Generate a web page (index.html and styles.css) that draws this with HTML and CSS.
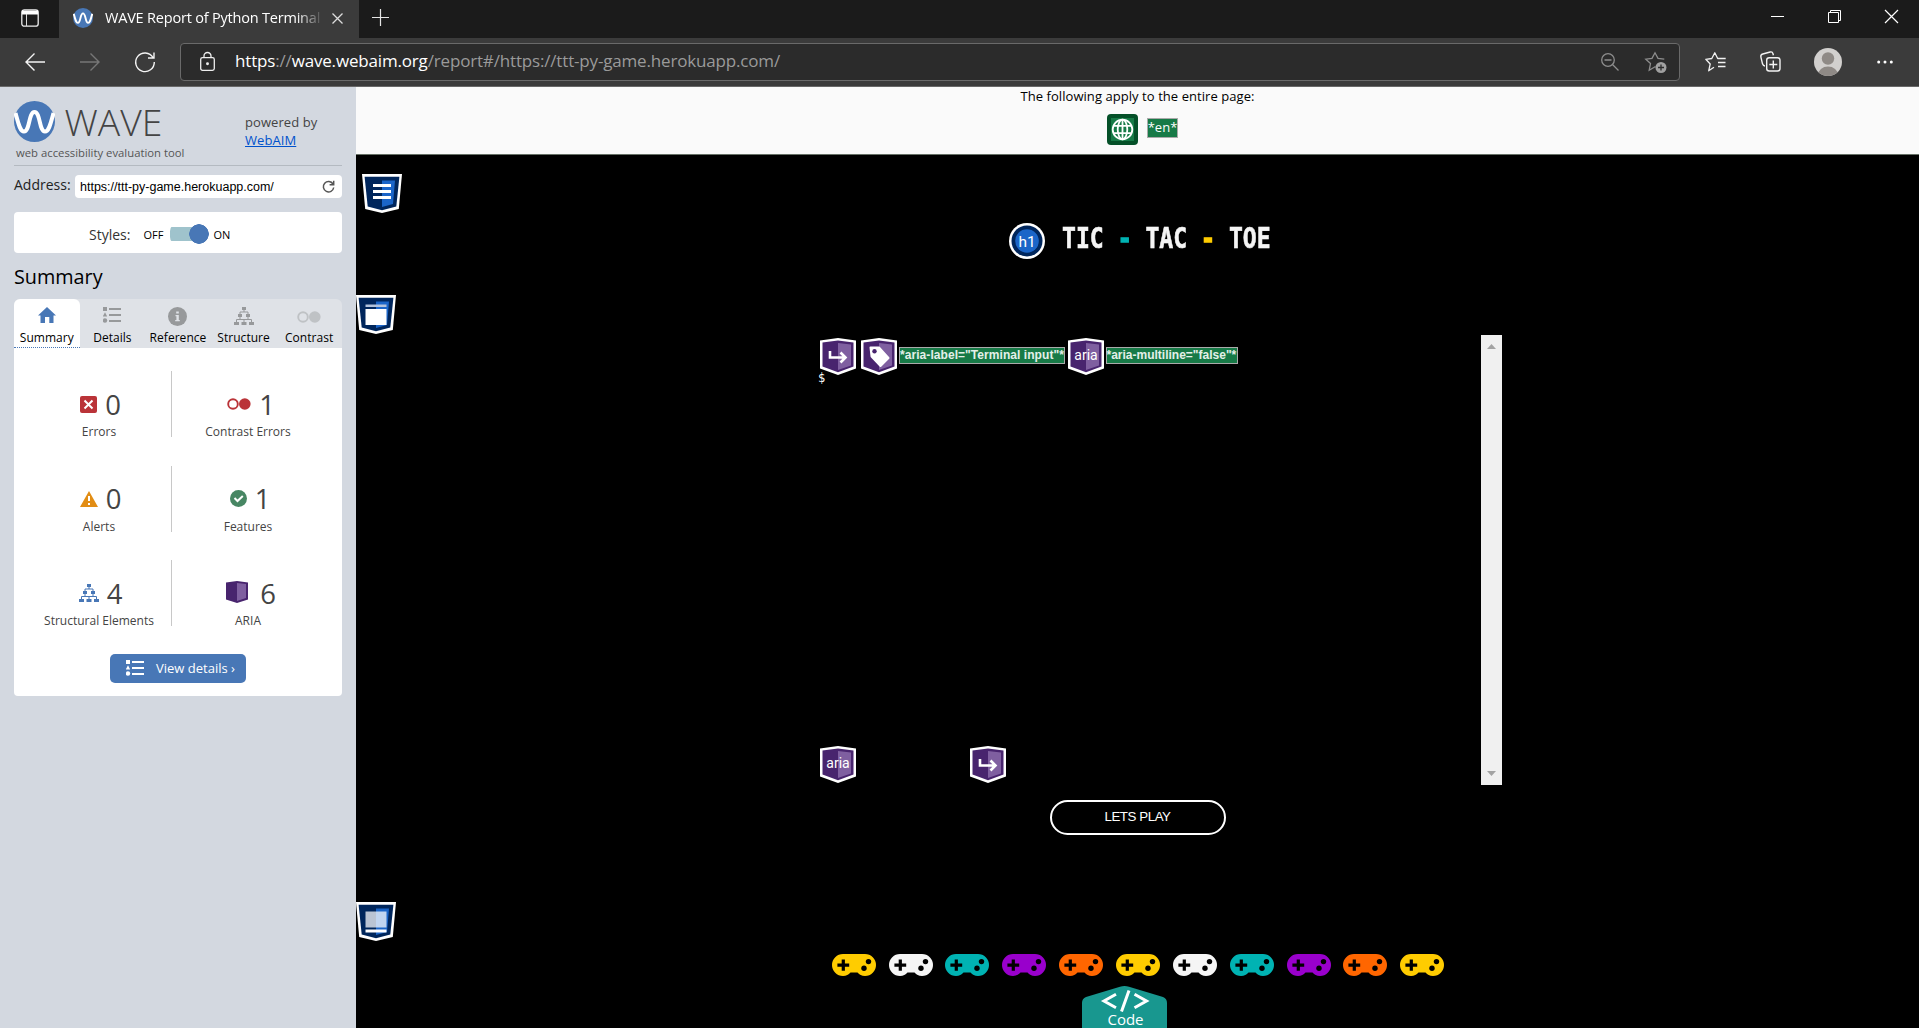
FILE: index.html
```html
<!DOCTYPE html>
<html lang="en">
<head>
<meta charset="utf-8">
<title>WAVE Report of Python Terminal</title>
<link rel="stylesheet" href="styles.css">
</head>
<body>
<svg class="defs" aria-hidden="true">
  <symbol id="wave" viewBox="0 0 41 41"><circle cx="20.5" cy="20.5" r="20.5" fill="#4877b6"/><path d="M1.5 12C4.500 23 6 30.500 10 30.500C16 30.500 14.500 11 20.500 11C26.500 11 25 30.500 31 30.500C35 30.500 36.500 23 39.500 12" fill="none" stroke="#fff" stroke-width="4"/></symbol>
  <symbol id="list" viewBox="0 0 18 16"><path d="M0 0h4v4H0zM2 5.200l2.200 4.300H-.2zM6 1h12v2H6zM6 7h12v2H6zM6 13h12v2H6z"/><circle cx="2" cy="13.500" r="2.200"/></symbol>
  <symbol id="tree" viewBox="0 0 20 18"><path d="M8 0h4v3H8zM4 7h4v3H4zM12 7h4v3h-4zM0 15h5v3H0zM7.500 15h5v3h-5zM15 15h5v3h-5z"/><path d="M10 3v2M6 7V5h8v2M6 10v2M14 10v2M2.500 15v-2.500h15V15M10 15v-2.500" fill="none" stroke="currentColor"/></symbol>
  <symbol id="dots" viewBox="0 0 24 12"><circle cx="6" cy="6" r="4.800" fill="none" stroke="currentColor" stroke-width="1.900"/><circle cx="17.800" cy="6" r="5.800"/></symbol>
  <symbol id="cube" viewBox="0 0 36 37"><path d="M0 2.500L18 0l18 2.500v28L18 37 0 30.500z" fill="#fff"/><path d="M2.500 4.600L18 2.500l15.500 2.100v24L18 34.200 2.500 28.600z" fill="#48246e"/><path d="M18 5l13 1.500v21L18 32z" fill="#7f5fa0"/></symbol>
  <symbol id="shield" viewBox="0 0 40 39"><path d="M0 0h40l-3.200 35L20 39 3.200 35z" fill="#fff"/><path d="M2.600 2.800h34.800L34.300 32.600 20 36.200 5.700 32.600z" fill="#00265c"/><path d="M20 6.500h13L31 30l-11 3z" fill="#1b65c8"/></symbol>
  <symbol id="pad" viewBox="0 0 44 22"><path d="M11 0h22a11 11 0 0 1 0 22c-3.500 0-5.500-1.500-7.500-3.500h-7C16.500 20.500 14.500 22 11 22a11 11 0 0 1 0-22z"/><path d="M9.700 5.500h3.200v4h4.300v3.200h-4.300v4H9.700v-4H5.400V9.500h4.300z" fill="#000"/><circle cx="36.500" cy="7.600" r="2.700" fill="#000"/><circle cx="32" cy="14.200" r="2.700" fill="#000"/></symbol>
</svg>

<header class="browser">
  <div class="tabbar">
    <svg class="workspace" width="18" height="18" viewBox="0 0 18 18"><rect x=".8" y=".8" width="16.400" height="16.400" rx="2.500" fill="none" stroke="#eee" stroke-width="1.300"/><path d="M1 1.500h16v4H1z" fill="#fff"/><path d="M5.500 5v12" stroke="#ddd"/></svg>
    <div class="tab">
      <svg width="20" height="20"><use href="#wave"/></svg>
      <span class="tab-title">WAVE Report of Python Terminal</span>
      <svg class="tab-close" width="11" height="11" viewBox="0 0 11 11"><path d="M.5.5l10 10M10.500.5l-10 10" stroke="#ddd" stroke-width="1.300"/></svg>
    </div>
    <svg class="newtab" width="17" height="17" viewBox="0 0 17 17"><path d="M8.500 0v17M0 8.500h17" stroke="#e5e5e5" stroke-width="1.200"/></svg>
    <div class="window-buttons">
      <svg width="13" height="13" viewBox="0 0 13 13"><path d="M0 6.500h13" stroke="#fff"/></svg>
      <svg width="13" height="13" viewBox="0 0 13 13" fill="none" stroke="#fff"><path d="M.5 2.500h10v10H.5zM2.500 2V.5h10v10H11"/></svg>
      <svg width="13" height="13" viewBox="0 0 13 13"><path d="M0 0l13 13M13 0L0 13" stroke="#fff" stroke-width="1.200"/></svg>
    </div>
  </div>
  <div class="toolbar">
    <svg width="20" height="18" viewBox="0 0 20 18" fill="none" stroke="#f4f4f4" stroke-width="1.400"><path d="M20 9H1M9.500.5L1 9l8.500 8.500"/></svg>
    <svg class="fwd" width="20" height="18" viewBox="0 0 20 18" fill="none" stroke="#777" stroke-width="1.400"><path d="M0 9h19M10.500.5L19 9l-8.500 8.500"/></svg>
    <svg class="reload" width="20" height="20" viewBox="0 0 20 20" fill="none" stroke="#f4f4f4" stroke-width="1.400"><path d="M18 5.500A9.300 9.300 0 1 0 19.300 10M19 .5V6h-6"/></svg>
    <div class="urlbar">
      <svg class="lock" width="15" height="19" viewBox="0 0 15 19" fill="none" stroke="#eee" stroke-width="1.300"><rect x=".7" y="5.700" width="13.600" height="12.600" rx="1.800"/><path d="M4 5.500V4a3.500 3.500 0 0 1 7 0v1.500"/><circle cx="7.500" cy="11.700" r=".8" fill="#eee"/></svg>
      <span class="url"><b>https</b>://<b>wave.webaim.org</b>/report#/https://ttt-py-game.herokuapp.com/</span>
      <svg class="zoomout" width="18" height="18" viewBox="0 0 18 18" fill="none" stroke="#8d8d8d" stroke-width="1.300"><circle cx="7" cy="7" r="6.300"/><path d="M3.500 7h7M11.500 11.500l6 6"/></svg>
      <svg class="addfav" width="22" height="22" viewBox="0 0 22 22" fill="none" stroke="#8d8d8d" stroke-width="1.300"><path d="M10.500 14.500l-6.300 3.800 1.300-6.800L.8 7.200l6.200-.8L10 .8l3 5.600 6.300.8"/><circle cx="16" cy="15.500" r="5.500" fill="#a0a0a0" stroke="none"/><path d="M16 12.500v6M13 15.500h6" stroke="#2b2b2b"/></svg>
    </div>
    <svg class="favs" width="21" height="20" viewBox="0 0 21 20" fill="none" stroke="#f2f2f2" stroke-width="1.300"><path d="M9 15.200l-5.300 3.600 1.500-6.800L.8 7.300l6-.8L9.800.8l2.900 5.700h8M13 10.500h7.500M13 14.500h7.500" stroke-linejoin="round"/></svg>
    <svg class="collections" width="21" height="21" viewBox="0 0 21 21" fill="none" stroke="#f2f2f2" stroke-width="1.400"><rect x="6.700" y="6.700" width="13.300" height="13.300" rx="2.500"/><path d="M13.300 9.500v8M9.300 13.500h8M5 15c-1.500 0-2-.8-2.500-2.200L.9 6.200C.5 4.500 1 3.500 2.800 3l7.400-2c1.500-.4 2.300 0 2.800 1.700l.4 1.500"/></svg>
    <svg class="avatar" width="28" height="28" viewBox="0 0 28 28"><clipPath id="round"><circle cx="14" cy="14" r="14"/></clipPath><g clip-path="url(#round)"><path d="M0 0h28v28H0z" fill="#d2d0ce"/><circle cx="14" cy="10.500" r="6.200" fill="#8f8a86"/><ellipse cx="14" cy="27" rx="10" ry="8.500" fill="#8f8a86"/></g></svg>
    <svg class="more" width="16" height="4" viewBox="0 0 16 4" fill="#fff"><circle cx="1.700" cy="2" r="1.500"/><circle cx="8" cy="2" r="1.500"/><circle cx="14.300" cy="2" r="1.500"/></svg>
  </div>
</header>

<div class="page">
  <aside class="sidebar">
    <div class="brand">
      <div class="logo">
        <div class="logo-row"><svg width="41" height="41"><use href="#wave"/></svg><span class="wordmark">WAVE</span></div>
        <div class="tagline">web accessibility evaluation tool</div>
      </div>
      <div class="powered">powered by<br><a>WebAIM</a></div>
    </div>
    <div class="address"><label>Address:</label><div class="field"><span>https://ttt-py-game.herokuapp.com/</span><svg width="13" height="13" viewBox="0 0 13 13" fill="none" stroke="#555" stroke-width="1.500"><path d="M11 4A5.200 5.200 0 1 0 11.700 7.500M11.700.7v4.100H7.600"/></svg></div></div>
    <div class="styles"><span class="styles-label">Styles:</span><span>OFF</span><i class="toggle"></i><span>ON</span></div>
    <h2>Summary</h2>
    <nav class="tabs">
      <div class="on"><svg width="18" height="16" viewBox="0 0 18 16"><path d="M9 0l9 8.500h-2.500V16h-4.200v-6H7v6H2.500V8.500H0z"/></svg><span>Summary</span></div>
      <div><svg width="18" height="16"><use href="#list"/></svg><span>Details</span></div>
      <div><svg width="19" height="19" viewBox="0 0 19 19"><circle cx="9.500" cy="9.500" r="9.500"/><path d="M8.200 4.500h2.600v2H8.200zM7.500 8h3.300v5h1v1.300H7.200V13h1.200V9.300h-.9z" fill="#dfe2e7"/></svg><span>Reference</span></div>
      <div><svg width="20" height="18"><use href="#tree"/></svg><span>Structure</span></div>
      <div class="faint"><svg width="24" height="12"><use href="#dots"/></svg><span>Contrast</span></div>
    </nav>
    <section class="panel">
      <div class="stats">
        <div class="stat red"><p><svg width="17" height="17" viewBox="0 0 17 17"><rect width="17" height="17" rx="2"/><path d="M4.500 4.500l8 8M12.500 4.500l-8 8" stroke="#fff" stroke-width="2"/></svg><b>0</b></p><span>Errors</span></div>
        <div class="stat red"><p><svg width="24" height="12"><use href="#dots"/></svg><b>1</b></p><span>Contrast Errors</span></div>
        <div class="stat orange"><p><svg width="18" height="16" viewBox="0 0 18 16"><path d="M9 0l9 16H0z"/><path d="M9 5v5M9 12v2" stroke="#fff" stroke-width="2"/></svg><b>0</b></p><span>Alerts</span></div>
        <div class="stat green"><p><svg width="17" height="17" viewBox="0 0 17 17"><circle cx="8.500" cy="8.500" r="8.500"/><path d="M4.500 8l3 3 5.300-5" fill="none" stroke="#fff" stroke-width="2"/></svg><b>1</b></p><span>Features</span></div>
        <div class="stat blue"><p><svg width="20" height="18"><use href="#tree"/></svg><b>4</b></p><span>Structural Elements</span></div>
        <div class="stat aria"><p><svg width="22" height="22" viewBox="0 0 22 22"><path d="M0 1.500L11 0l11 1.500v17L11 22 0 18.500z" fill="#48246e"/><path d="M11 2l9 1v14l-9 3z" fill="#7f5fa0"/></svg><b>6</b></p><span>ARIA</span></div>
      </div>
      <div class="details"><svg width="18" height="16" fill="#fff"><use href="#list"/></svg><span>View details ›</span></div>
    </section>
  </aside>

  <main>
    <div class="notice">
      <p>The following apply to the entire page:</p>
      <div class="notice-icons">
        <svg width="31" height="31" viewBox="0 0 31 31"><rect width="31" height="31" rx="4" fill="#045028"/><path d="M4 4h23v23H4z" fill="#177a47"/><g fill="none" stroke="#fff" stroke-width="1.800"><circle cx="15.500" cy="15.500" r="9.800"/><ellipse cx="15.500" cy="15.500" rx="4.800" ry="9.800"/><path d="M15.500 5.500v20M6.500 11.800h18M6.500 19.200h18"/></g></svg>
        <span class="tip en">*en*</span>
      </div>
    </div>
    <div class="stage">
      <svg class="mark m1" width="40" height="39"><use href="#shield"/><path d="M11 10.500h18M11 16.500h18M11 22.500h18" transform="translate(0 1)" stroke="#fff" stroke-width="3"/></svg>
      <svg class="mark m2" width="40" height="39"><use href="#shield"/><path d="M9.500 9.500h21V12h-21z" fill="#b3c3dc"/><path d="M9.500 14h21v16h-21z" fill="#fff"/></svg>
      <svg class="mark m3" width="40" height="39"><use href="#shield"/><path d="M9.500 9.500h21v16h-21z" fill="#fff" opacity=".73"/><path d="M9.500 27.500h21v3h-21z" fill="#fff"/></svg>

      <div class="title">
        <svg width="36" height="36" viewBox="0 0 36 36"><circle cx="18" cy="18" r="18" fill="#fff"/><circle cx="18" cy="18" r="15.500" fill="#00265c"/><circle cx="18" cy="18" r="11.800" fill="#1b65c8"/><text x="18" y="23.500" text-anchor="middle" class="icon-text h1-text">h1</text></svg>
        <h1>TIC <i class="teal">-</i> TAC <i class="yellow">-</i> TOE</h1>
      </div>

      <div class="terminal">
        <div class="screen">
          <div class="line">
            <svg width="36" height="37"><use href="#cube"/><path d="M10 13v6.500h15M20.500 14.500l5 5-5 5" fill="none" stroke="#fff" stroke-width="2.600"/></svg>
            <svg width="36" height="37"><use href="#cube"/><path d="M9.500 9.500h8.500l9.500 10.500-8 8-9-9.500z" fill="#fff" stroke="#fff" stroke-width="2" stroke-linejoin="round"/><circle cx="13.500" cy="13.300" r="2.200" fill="#48246e"/></svg>
            <span class="tip bold label">*aria-label="Terminal input"*</span>
            <svg width="36" height="37"><use href="#cube"/><text x="18" y="22" text-anchor="middle" class="icon-text">aria</text></svg>
            <span class="tip bold multi">*aria-multiline="false"*</span>
          </div>
          <div class="prompt">$</div>
          <div class="line last">
            <svg width="36" height="37"><use href="#cube"/><text x="18" y="22" text-anchor="middle" class="icon-text">aria</text></svg>
            <svg width="36" height="37"><use href="#cube"/><path d="M10 13v6.500h15M20.500 14.500l5 5-5 5" fill="none" stroke="#fff" stroke-width="2.600"/></svg>
          </div>
        </div>
        <div class="scrollbar"><svg width="9" height="5"><path d="M0 5l4.500-5L9 5z" fill="#a3a3a3"/></svg><svg width="9" height="5"><path d="M0 0l4.500 5L9 0z" fill="#a3a3a3"/></svg></div>
      </div>
      <button>LETS PLAY</button>
      <div class="pads">
        <svg class="yellow"><use href="#pad"/></svg><svg class="white"><use href="#pad"/></svg><svg class="teal"><use href="#pad"/></svg><svg class="purple"><use href="#pad"/></svg><svg class="orange"><use href="#pad"/></svg><svg class="yellow"><use href="#pad"/></svg><svg class="white"><use href="#pad"/></svg><svg class="teal"><use href="#pad"/></svg><svg class="purple"><use href="#pad"/></svg><svg class="orange"><use href="#pad"/></svg><svg class="yellow"><use href="#pad"/></svg>
      </div>
      <div class="code">
        <svg width="85" height="42" viewBox="0 0 85 42"><path d="M0 42V17q0-4.500 4-6L38 .8q4.500-1.400 9 0L81 11q4 1.500 4 6v25z" fill="#18978f"/><path d="M34 8.300L22 15l12 6.700M52.500 8.300L64.500 15l-12 6.700M47 4.500l-7.500 21" fill="none" stroke="#fff" stroke-width="3"/><text x="43.500" y="38.500" text-anchor="middle" class="code-text">Code</text></svg>
      </div>
    </div>
  </main>
</div>
</body>
</html>
```
FILE: styles.css
```css
* { box-sizing: border-box; }
body { margin: 0; width: 1919px; height: 1028px; overflow: hidden; background: #000; font-family: "Open Sans", sans-serif; font-size: 13px; color: #000; }
p, h1, h2 { margin: 0; font-weight: 400; }
svg { display: block; flex: none; overflow: visible; }
span, b, label { white-space: nowrap; }
.defs { position: absolute; width: 0; height: 0; }

/* browser frame */
.browser { height: 87px; background: #3b3b3b; border-bottom: 1px solid #686868; }
.tabbar { height: 38px; background: #1b1b1b; display: flex; align-items: flex-start; }
.workspace { margin: 9px 20px 0 21px; }
.tab { width: 300px; height: 38px; background: #3b3b3b; display: flex; align-items: center; padding: 0 15px 2px 14px; }
.tab-title { margin: -2px 0 0 12px; width: 217px; overflow: hidden; font-size: 14.5px; letter-spacing: -.2px; color: #fff; -webkit-mask-image: linear-gradient(90deg, #000 88%, transparent 101%); mask-image: linear-gradient(90deg, #000 88%, transparent 101%); }
.tab-close { margin: 1px 1px 0 auto; }
.newtab { margin: 9px 0 0 13px; }
.window-buttons { margin: 10px 21.500px 0 auto; display: flex; gap: 44px; }
.toolbar { height: 48px; display: flex; align-items: center; padding-left: 25px; }
.toolbar > svg { margin-top: -1px; }
.toolbar .fwd { margin-left: 35px; }
.toolbar .reload { margin-left: 35px; }
.urlbar { margin-left: 25px; width: 1500px; height: 38px; border: 1px solid #6a6a6a; border-radius: 4px; background: #2b2b2b; display: flex; align-items: center; padding-left: 19px; }
.lock { margin-top: -1px; }
.url { margin: -3px 0 0 20px; color: #9a9a9a; font-size: 17px; letter-spacing: -.17px; }
.url b { color: #fff; font-weight: 400; }
.zoomout { margin-left: auto; }
.addfav { margin: 2px 12px 0 26px; }
.toolbar .favs { margin-left: 25px; }
.toolbar .collections { margin-left: 34px; }
.toolbar .avatar { margin-left: 33px; }
.toolbar .more { margin-left: 35px; }

.page { display: flex; height: 941px; }

/* evaluation panel */
.sidebar { width: 356px; background: #d3d8e0; padding: 14px 14px 0; }
.brand { height: 65px; display: flex; border-bottom: 1px solid #b4bac1; }
.logo { width: 231px; }
.logo-row { display: flex; height: 41px; align-items: center; }
.wordmark { margin: 1px 0 0 9.500px; font-size: 37.300px; font-weight: 300; line-height: 40px; color: #444; }
.tagline { margin: 2px 0 0 2px; font-size: 11.3px; line-height: 17px; color: #555; white-space: nowrap; }
.powered { padding-top: 12px; line-height: 18px; color: #444; letter-spacing: .08px; }
.powered a { color: #0052cc; text-decoration: underline; }
.address { display: flex; margin-top: 9px; height: 23px; }
.address label { width: 61px; font-size: 14px; line-height: 20px; color: #222; }
.field { flex: 1; background: #fff; border-radius: 4px; display: flex; align-items: center; justify-content: space-between; padding: 0 7px 0 5px; font: 12.500px "Liberation Sans", sans-serif; }
.styles { margin-top: 14px; height: 41px; background: #fff; border-radius: 4px; display: flex; align-items: center; padding: 4px 0 0 75px; font-size: 11px; }
.styles-label { width: 54.500px; font-size: 14px; color: #333; }
.toggle { width: 39px; height: 20px; margin: -1px 4.500px 0 6.500px; background: radial-gradient(circle at 29px 10px, #4877b6 9.500px, transparent 10px), linear-gradient(#9fc3cc, #9fc3cc) 0 3px / 30px 14px no-repeat; border-radius: 7px; }
.sidebar h2 { margin-top: 8px; height: 38px; font-size: 19.800px; line-height: 31px; }
.tabs { display: flex; height: 49px; background: #dfe2e7; border-radius: 6px 6px 0 0; color: #97999b; fill: currentColor; }
.tabs div { width: 65.600px; display: grid; grid-template-rows: 30px 18px; justify-items: center; padding-top: 8px; align-items: start; }
.tabs span { color: #000; font-size: 12px; line-height: 17px; margin-top: -8px; letter-spacing: .05px; }
.tabs div.on { background: #fff; border-radius: 6px 6px 0 0; border-bottom: 1px dotted #4877b6; color: #4877b6; }
.tabs .faint { color: #bfc2c5; padding-top: 12px; grid-template-rows: 26px 18px; }
.panel { height: 348px; background: #fff; border-radius: 0 0 4px 4px; padding-top: 23px; }
.stats { display: grid; grid-template-columns: 158px 149px; grid-auto-rows: 94.500px; fill: currentColor; }
.stat { height: 66px; text-align: center; padding-top: 14px; padding-left: 13px; }
.stat:nth-child(odd) { border-right: 1px solid #c8c8c8; }
.stat:nth-child(even) { padding-left: 3px; }
.stat p { display: flex; justify-content: center; align-items: center; gap: 8px; height: 38px; margin-left: 3px; }
.stat b { color: #444; font-size: 27.500px; font-weight: 400; line-height: 38px; margin-top: 1px; }
.stat:nth-child(even) p { margin-left: 4px; }
.stat.aria p { gap: 12px; margin-left: 6px; }
.stat.aria svg { margin-top: -2px; }
.stat.red:nth-child(even) p { margin-left: 6px; }
.stat span { display: block; font-size: 12px; line-height: 18px; color: #444; }
.red { color: #ba3338; } .stat.orange { color: #e28d14; } .green { color: #478663; } .blue { color: #4877b6; }
.details { margin: -1px 0 0 96px; width: 136px; height: 29px; border-radius: 5px; background: #4877b6; color: #fff; display: flex; align-items: center; padding-left: 16px; gap: 12px; }

/* evaluated page */
main { width: 1563px; }
.notice { height: 68px; background: #fafafa; border-bottom: 1px solid #667066; text-align: center; }
.notice p { height: 27px; line-height: 19px; letter-spacing: .06px; }
.notice-icons { display: flex; justify-content: center; gap: 9px; margin-left: 10px; }
.tip { background: #177a47; color: #fff; border: 1px solid #aaa; line-height: 17px; }
.tip.en { height: 20px; margin-top: 4px; }
.tip.bold { font: bold 12px/15px "Liberation Sans", sans-serif; color: #e4f0e9; height: 17px; }
.icon-text { font: 14px Roboto, sans-serif; fill: #fff; }
.h1-text { font-size: 15.500px; }
.stage { position: relative; height: 873px; overflow: hidden; background: #000; display: flex; flex-direction: column; align-items: center; }
.mark { position: absolute; left: .5px; }
.m1 { left: 6.500px; top: 19px; }
.m2 { top: 140px; }
.m3 { top: 747px; }
.mark { margin-left: -.5px; }
.title { margin: 68px 0 0 3px; height: 36px; display: flex; align-items: center; gap: 17px; width: 261px; }
.title h1 { font: bold 28px/36px "DejaVu Sans Mono", monospace; color: #f5f5f5; transform: scaleX(.825); transform-origin: 0 50%; width: 206px; white-space: pre; margin-top: -4px; -webkit-text-stroke: .6px currentColor; }
.title i { font-style: normal; -webkit-text-stroke: 1.600px currentColor; }
.teal { color: #00b3b3; } .yellow { color: #fc0; } .white { color: #f5f5f5; } .purple { color: #90c; } .pads .orange { color: #f60; }
.terminal { width: 729px; height: 450px; margin-top: 76px; display: flex; justify-content: space-between; }
.screen { padding: 2.500px 0 2.500px 47px; display: flex; flex-direction: column; }
.line { display: flex; align-items: center; }
.line svg + svg { margin-left: 5px; }
.line .tip { margin: -1px 2.500px 0 2px; }
.tip.label { width: 166px; letter-spacing: .06px; }
.tip.multi { width: 132px; }
.prompt { color: #fff; font: 12px/14px "DejaVu Sans Mono", monospace; margin: -4px 0 0 -2px; }
.last { margin-top: auto; }
.last svg + svg { margin-left: 114px; }
.scrollbar { width: 21px; background: #f0f0f0; display: flex; flex-direction: column; align-items: center; justify-content: space-between; padding: 9px 0; }
button { margin-top: 15px; width: 176px; height: 35px; padding: 0 0 3px; border: 2px solid #fff; border-radius: 18px; background: #000; color: #fff; font: 13.330px "Liberation Sans", sans-serif; letter-spacing: -.45px; }
.pads { margin: 119px 0 0 1px; display: flex; gap: 12.850px; fill: currentColor; }
.pads svg { width: 44px; height: 22px; }
.code { margin: 10px 26px 0 0; }
.code-text { font: 15px "Open Sans", sans-serif; fill: #fff; }
```
